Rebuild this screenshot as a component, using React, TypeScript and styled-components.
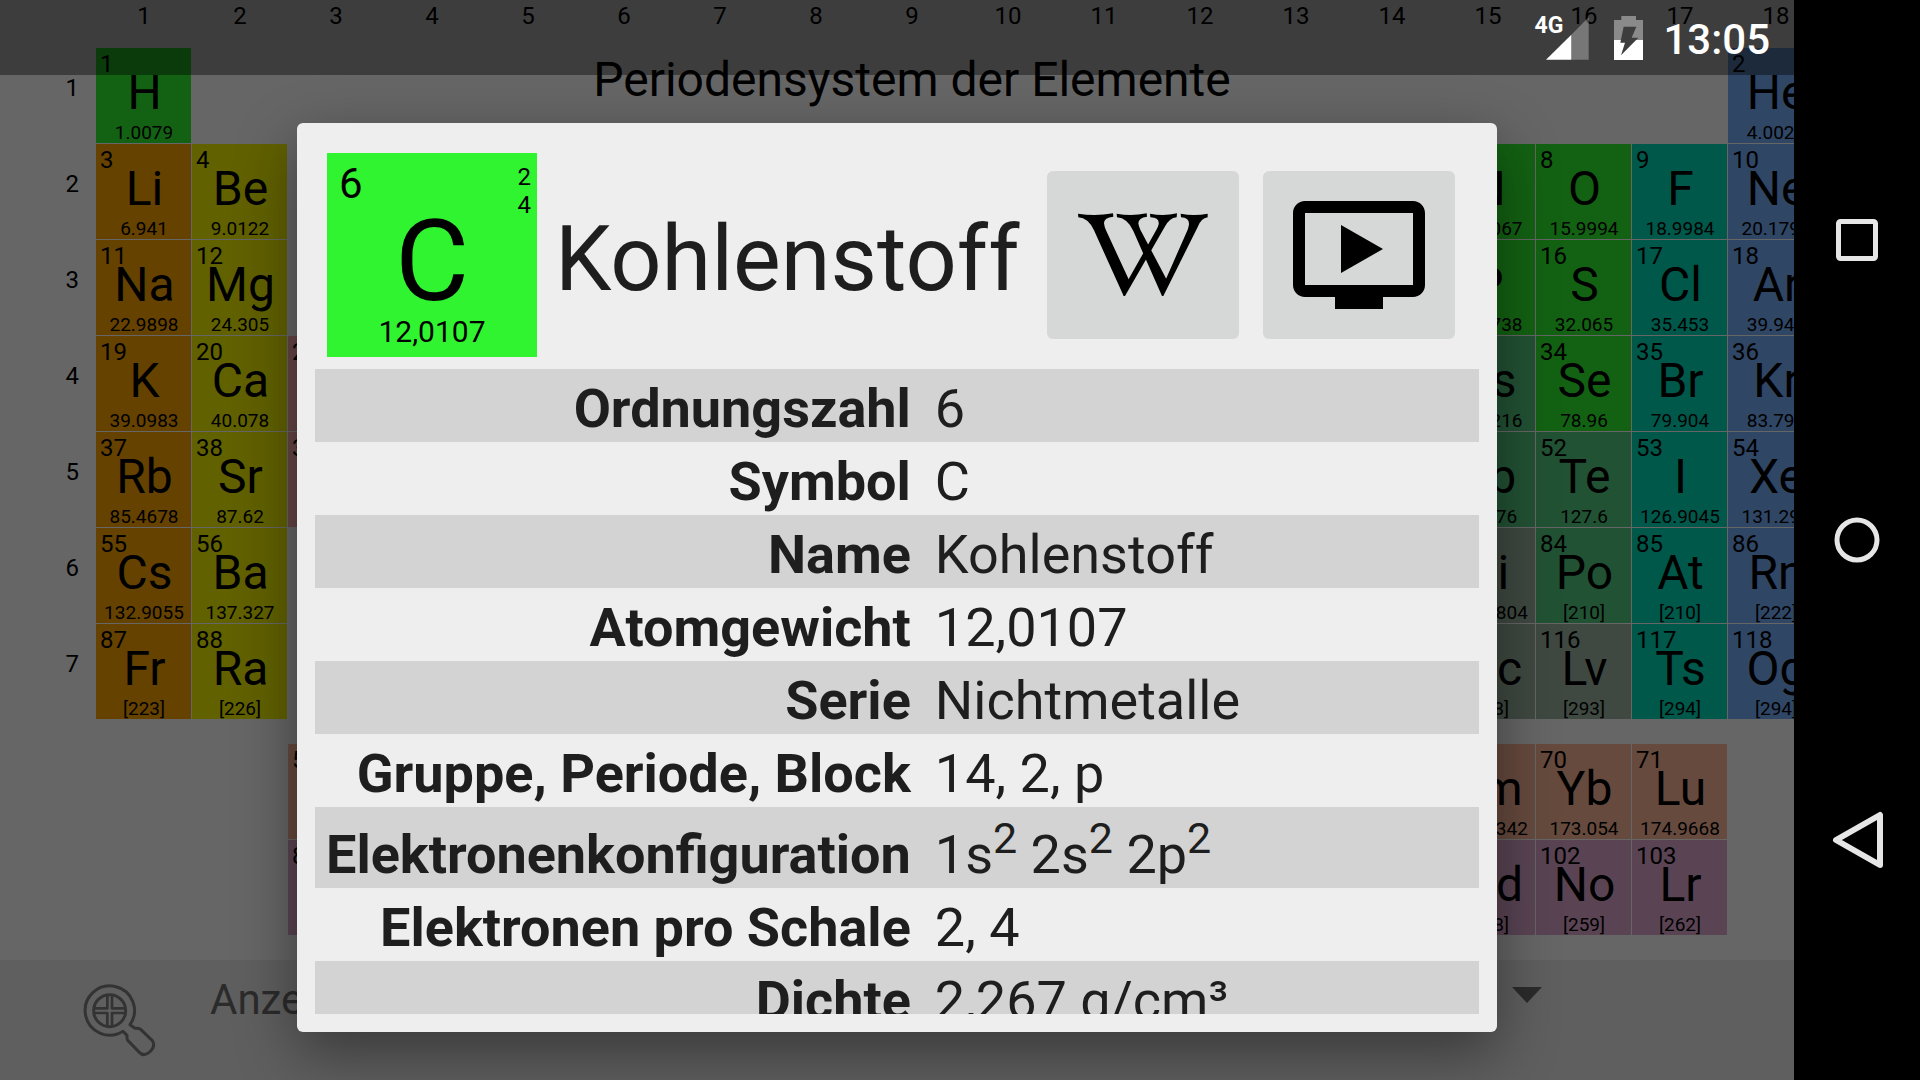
import React from 'react';
import styled, { createGlobalStyle } from 'styled-components';

const GlobalStyle = createGlobalStyle`
  *, *::before, *::after { box-sizing: border-box; }
  body {
    margin: 0;
    background: #000;
    font-family: Roboto, "Noto Sans", sans-serif;
  }
`;

const seriesColors = {
  nonmetal: '#30f430',
  alkali: '#ffa500',
  alkaline: '#f2f200',
  transition: '#ffb0b0',
  lanthanide: '#ffb89c',
  actinide: '#e0aad2',
  metalloid: '#55cc82',
  post: '#9db6a3',
  halogen: '#00dcba',
  noble: '#78aefc',
};

type Series = keyof typeof seriesColors;
type ElementData = [number, string, string, Series, number, number];

/* number, symbol, mass, series, group, row */
const elements: ElementData[] = [
  [1, 'H', '1.0079', 'nonmetal', 1, 1],
  [2, 'He', '4.0026', 'noble', 18, 1],
  [3, 'Li', '6.941', 'alkali', 1, 2],
  [4, 'Be', '9.0122', 'alkaline', 2, 2],
  [7, 'N', '14.0067', 'nonmetal', 15, 2],
  [8, 'O', '15.9994', 'nonmetal', 16, 2],
  [9, 'F', '18.9984', 'halogen', 17, 2],
  [10, 'Ne', '20.1797', 'noble', 18, 2],
  [11, 'Na', '22.9898', 'alkali', 1, 3],
  [12, 'Mg', '24.305', 'alkaline', 2, 3],
  [15, 'P', '30.9738', 'nonmetal', 15, 3],
  [16, 'S', '32.065', 'nonmetal', 16, 3],
  [17, 'Cl', '35.453', 'halogen', 17, 3],
  [18, 'Ar', '39.948', 'noble', 18, 3],
  [19, 'K', '39.0983', 'alkali', 1, 4],
  [20, 'Ca', '40.078', 'alkaline', 2, 4],
  [21, 'Sc', '44.9559', 'transition', 3, 4],
  [33, 'As', '74.9216', 'metalloid', 15, 4],
  [34, 'Se', '78.96', 'nonmetal', 16, 4],
  [35, 'Br', '79.904', 'halogen', 17, 4],
  [36, 'Kr', '83.798', 'noble', 18, 4],
  [37, 'Rb', '85.4678', 'alkali', 1, 5],
  [38, 'Sr', '87.62', 'alkaline', 2, 5],
  [39, 'Y', '88.9059', 'transition', 3, 5],
  [51, 'Sb', '121.76', 'metalloid', 15, 5],
  [52, 'Te', '127.6', 'metalloid', 16, 5],
  [53, 'I', '126.9045', 'halogen', 17, 5],
  [54, 'Xe', '131.293', 'noble', 18, 5],
  [55, 'Cs', '132.9055', 'alkali', 1, 6],
  [56, 'Ba', '137.327', 'alkaline', 2, 6],
  [83, 'Bi', '208.9804', 'post', 15, 6],
  [84, 'Po', '[210]', 'metalloid', 16, 6],
  [85, 'At', '[210]', 'halogen', 17, 6],
  [86, 'Rn', '[222]', 'noble', 18, 6],
  [87, 'Fr', '[223]', 'alkali', 1, 7],
  [88, 'Ra', '[226]', 'alkaline', 2, 7],
  [115, 'Mc', '[288]', 'post', 15, 7],
  [116, 'Lv', '[293]', 'post', 16, 7],
  [117, 'Ts', '[294]', 'halogen', 17, 7],
  [118, 'Og', '[294]', 'noble', 18, 7],
  [57, 'La', '138.9055', 'lanthanide', 3, 9],
  [69, 'Tm', '168.9342', 'lanthanide', 15, 9],
  [70, 'Yb', '173.054', 'lanthanide', 16, 9],
  [71, 'Lu', '174.9668', 'lanthanide', 17, 9],
  [89, 'Ac', '[227]', 'actinide', 3, 10],
  [101, 'Md', '[258]', 'actinide', 15, 10],
  [102, 'No', '[259]', 'actinide', 16, 10],
  [103, 'Lr', '[262]', 'actinide', 17, 10],
];

const groups = Array.from({ length: 18 }, (_, i) => i + 1);
const periods = [1, 2, 3, 4, 5, 6, 7];

const Superscript = styled.sup`
  font-size: 43px;
  line-height: 50px;
  vertical-align: 20px;
`;

const properties: [string, React.ReactNode][] = [
  ['Ordnungszahl', '6'],
  ['Symbol', 'C'],
  ['Name', 'Kohlenstoff'],
  ['Atomgewicht', '12,0107'],
  ['Serie', 'Nichtmetalle'],
  ['Gruppe, Periode, Block', '14, 2, p'],
  [
    'Elektronenkonfiguration',
    <>
      1s<Superscript>2</Superscript> 2s<Superscript>2</Superscript> 2p<Superscript>2</Superscript>
    </>,
  ],
  ['Elektronen pro Schale', '2, 4'],
  ['Dichte', '2,267 g/cm³'],
];

const Device = styled.div`
  display: flex;
  height: 100vh;
  overflow: hidden;
`;

const Screen = styled.main`
  position: relative;
  flex: 1;
  min-width: 0;
  display: flex;
  flex-direction: column;
  overflow: hidden;
  background: #fff;
`;

const TableArea = styled.section`
  flex: 1;
  min-height: 0;
  overflow: hidden;
`;

const PeriodicGrid = styled.div`
  display: grid;
  grid-template-columns: repeat(19, 96px);
  grid-template-rows: 48px repeat(7, 96px) 24px repeat(2, 96px);
  color: #000;
`;

const GroupLabel = styled.div<{ $group: number }>`
  grid-column: ${(p) => p.$group + 1};
  grid-row: 1;
  padding-top: 2px;
  font-size: 24px;
  line-height: 28px;
  text-align: center;
`;

const PeriodLabel = styled.div<{ $row: number }>`
  grid-column: 1;
  grid-row: ${(p) => p.$row + 1};
  padding: 26px 17px 0 0;
  font-size: 24px;
  line-height: 28px;
  text-align: right;
`;

const TableTitle = styled.h1`
  grid-column: 4 / 17;
  grid-row: 2;
  margin: 0;
  padding-top: 4px;
  font-size: 48px;
  font-weight: 400;
  line-height: 56px;
  text-align: center;
`;

const Cell = styled.button<{ $series: Series; $group: number; $row: number }>`
  grid-column: ${(p) => p.$group + 1};
  grid-row: ${(p) => p.$row + 1};
  display: grid;
  grid-template: 100% / 100%;
  margin: 0 1px 1px 0;
  padding: 0;
  border: 0;
  background: ${(p) => seriesColors[p.$series]};
  color: #000;
  font-family: inherit;

  & > * { grid-area: 1 / 1; }
`;

const CellNumber = styled.span`
  align-self: start;
  padding: 2px 0 0 4px;
  font-size: 24px;
  line-height: 28px;
  text-align: left;
`;

const CellSymbol = styled.span`
  align-self: center;
  padding: 0 0 6px 2px;
  font-size: 48px;
  line-height: 56px;
  text-align: center;
`;

const CellMass = styled.span`
  align-self: end;
  padding-left: 1px;
  font-size: 19px;
  line-height: 20px;
  text-align: center;
`;

const Footer = styled.footer`
  display: flex;
  align-items: flex-start;
  gap: 45px;
  height: 120px;
  padding: 16px 252px 0 75px;
  background: #ededed;
`;

const ZoomButton = styled.button`
  flex: none;
  padding: 0;
  border: 0;
  background: none;

  svg { display: block; }
`;

const Spinner = styled.label`
  flex: 1;
  display: flex;
  color: #6c6c6c;

  svg { flex: none; margin-top: 11px; }
`;

const SpinnerSelect = styled.select`
  flex: 1;
  appearance: none;
  height: 48px;
  padding: 0;
  border: 0;
  background: none;
  color: inherit;
  font-family: inherit;
  font-size: 42px;
  line-height: 48px;
`;

const Scrim = styled.div`
  position: absolute;
  inset: 0;
  display: flex;
  justify-content: center;
  padding: 123px 48px 48px;
  background: rgba(0, 0, 0, 0.6);
`;

const Dialog = styled.div`
  display: flex;
  flex-direction: column;
  width: 100%;
  max-width: 1200px;
  padding: 18px;
  border-radius: 6px;
  background: #eeeeee;
  box-shadow: 0 20px 60px rgba(0, 0, 0, 0.42);
  color: #1e1e1e;
`;

const DialogHeader = styled.header`
  flex: none;
  display: flex;
  align-items: center;
  gap: 24px;
  padding: 12px 24px 12px 12px;
`;

const Tile = styled.div`
  flex: none;
  display: grid;
  grid-template: 100% / 100%;
  width: 210px;
  height: 204px;
  background: #30f430;
  color: #000;

  & > * { grid-area: 1 / 1; }
`;

const TileNumber = styled.span`
  padding: 6px 0 0 12px;
  font-size: 42px;
  line-height: 49px;
`;

const TileShells = styled.div`
  display: flex;
  flex-direction: column;
  padding: 10px 6px 0 0;
  font-size: 24px;
  line-height: 28px;
  text-align: right;
`;

const TileSymbol = styled.span`
  align-self: center;
  padding-top: 12px;
  font-size: 114px;
  line-height: 134px;
  text-align: center;
`;

const TileMass = styled.span`
  align-self: end;
  padding-bottom: 8px;
  font-size: 30px;
  line-height: 35px;
  text-align: center;
`;

const DialogTitle = styled.h2`
  flex: 1;
  min-width: 0;
  margin: 0 0 0 -6px;
  padding-top: 8px;
  font-size: 90px;
  font-weight: 400;
  line-height: 105px;
  white-space: nowrap;
`;

const ActionButton = styled.button`
  flex: none;
  display: flex;
  align-items: center;
  justify-content: center;
  width: 192px;
  height: 168px;
  padding: 0;
  border: 0;
  border-radius: 6px;
  background: #d6d7d7;
`;

const Scroller = styled.div`
  flex: 1;
  min-height: 0;
  overflow: hidden;
`;

const PropertyTable = styled.table`
  width: 100%;
  border-collapse: collapse;
  font-size: 54px;
  line-height: 67px;
`;

const PropertyRow = styled.tr`
  &:nth-child(odd) { background: #d3d3d3; }
`;

const PropertyName = styled.th`
  width: 1px;
  padding: 6px 12px 0 11px;
  font-weight: 700;
  text-align: right;
  white-space: nowrap;
  vertical-align: baseline;
`;

const PropertyValue = styled.td`
  padding: 6px 12px 0;
  vertical-align: baseline;
`;

const StatusBar = styled.div`
  position: absolute;
  inset: 0 0 auto;
  display: flex;
  align-items: center;
  justify-content: flex-end;
  gap: 20px;
  height: 75px;
  padding-right: 24px;
  background: rgba(0, 0, 0, 0.4);
  color: #fff;

  svg { display: block; }
`;

const Signal = styled.div`
  position: relative;
  margin-right: 5px;
  padding: 2px 0 0 12px;
`;

const SignalLabel = styled.span`
  position: absolute;
  top: -2px;
  left: 0;
  font-size: 23px;
  font-weight: 700;
  line-height: 26px;
`;

const Clock = styled.time`
  padding-top: 4px;
  font-size: 42px;
  font-weight: 500;
  line-height: 49px;
`;

const NavigationBar = styled.nav`
  flex: none;
  display: flex;
  flex-direction: column;
  justify-content: center;
  width: 126px;
  background: #000;
`;

const NavButton = styled.button`
  display: flex;
  align-items: center;
  justify-content: center;
  height: 300px;
  padding: 0;
  border: 0;
  background: none;
`;

function ElementCell({ data }: { data: ElementData }) {
  const [number, symbol, mass, series, group, row] = data;
  return (
    <Cell type="button" $series={series} $group={group} $row={row}>
      <CellNumber>{number}</CellNumber>
      <CellSymbol>{symbol}</CellSymbol>
      <CellMass>{mass}</CellMass>
    </Cell>
  );
}

function MagnifierIcon() {
  return (
    <svg width="90" height="90" viewBox="0 0 270 270" fill="none" stroke="#808080" strokeWidth="9" strokeLinejoin="round">
      <path d="M165 146A74 74 0 1 0 144 166L156 178Q155 190 159 194L193 229Q207 243 224 228Q243 210 232 194L197 160Q192 156 180 157Z" />
      <circle cx="104" cy="104" r="48" />
      <path d="M97 57V97H57M111 57V97H151M97 151V111H57M111 151V111H151" strokeWidth="8" />
    </svg>
  );
}

function WikipediaIcon() {
  return (
    <svg width="146" height="100" viewBox="0 0 438 300" fill="#000">
      <path d="M24 26Q76 34 129 25L130 35Q101 38 102 55Q103 65 108 76L177 225L164 273H161L72 76Q55 39 25 37Z" />
      <path d="M140 26Q184 34 230 25L231 35Q205 38 205 55Q206 64 211 74L289 222L279 273H276L190 78Q172 39 141 37Z" />
      <path d="M161 273H165L284 66Q298 39 320 37L321 25Q281 34 240 26L241 37Q269 38 266 58Q264 66 260 73L174 226Z" />
      <path d="M276 273H280L382 68Q393 39 413 37V26Q372 34 332 26L333 37Q358 38 357 58Q356 66 353 74L287 224Z" />
    </svg>
  );
}

function VideoIcon() {
  return (
    <svg width="144" height="144" viewBox="0 0 24 24" fill="#000">
      <path d="M21 3H3c-1.1 0-2 .9-2 2v12c0 1.1.9 2 2 2h5v2h8v-2h5c1.1 0 2-.9 2-2V5c0-1.1-.9-2-2-2zm0 14H3V5h18v12zm-5-6l-7 4V7z" />
    </svg>
  );
}

function SignalIcon() {
  return (
    <svg width="43" height="43" viewBox="196 49 129 129">
      <path d="M272 102L324 50V177H272Z" fill="#fff" fillOpacity="0.3" />
      <path d="M196 177L272 102V177Z" fill="#fff" />
    </svg>
  );
}

function BatteryIcon() {
  return (
    <svg width="29" height="44" viewBox="399 45 87 132">
      <path d="M421 45H465V57H486V117H399V57H421Z" fill="#fff" fillOpacity="0.4" />
      <path d="M399 117H486V177H399Z" fill="#fff" />
      <path d="M428 77H466L452 110H472L420 163L432 125H418Z" fill="#3d3d3d" />
    </svg>
  );
}

export default function App() {
  return (
    <>
      <GlobalStyle />
      <Device>
        <Screen>
          <TableArea>
            <PeriodicGrid>
              {groups.map((g) => <GroupLabel key={g} $group={g}>{g}</GroupLabel>)}
              {periods.map((p) => <PeriodLabel key={p} $row={p}>{p}</PeriodLabel>)}
              <TableTitle>Periodensystem der Elemente</TableTitle>
              {elements.map((e) => <ElementCell key={e[0]} data={e} />)}
            </PeriodicGrid>
          </TableArea>
          <Footer>
            <ZoomButton type="button" aria-label="Vergrößern"><MagnifierIcon /></ZoomButton>
            <Spinner>
              <SpinnerSelect aria-label="Anzeige">
                <option>Anzeige</option>
              </SpinnerSelect>
              <svg width="30" height="16" viewBox="0 0 30 16"><path d="M0 0H30L15 16Z" fill="currentColor" /></svg>
            </Spinner>
          </Footer>
          <Scrim>
            <Dialog role="dialog" aria-labelledby="element-name">
              <DialogHeader>
                <Tile>
                  <TileNumber>6</TileNumber>
                  <TileShells><span>2</span><span>4</span></TileShells>
                  <TileSymbol>C</TileSymbol>
                  <TileMass>12,0107</TileMass>
                </Tile>
                <DialogTitle id="element-name">Kohlenstoff</DialogTitle>
                <ActionButton type="button" aria-label="Wikipedia"><WikipediaIcon /></ActionButton>
                <ActionButton type="button" aria-label="Video"><VideoIcon /></ActionButton>
              </DialogHeader>
              <Scroller>
                <PropertyTable>
                  <tbody>
                    {properties.map(([name, value]) => (
                      <PropertyRow key={name}>
                        <PropertyName scope="row">{name}</PropertyName>
                        <PropertyValue>{value}</PropertyValue>
                      </PropertyRow>
                    ))}
                  </tbody>
                </PropertyTable>
              </Scroller>
            </Dialog>
          </Scrim>
          <StatusBar>
            <Signal>
              <SignalLabel>4G</SignalLabel>
              <SignalIcon />
            </Signal>
            <BatteryIcon />
            <Clock>13:05</Clock>
          </StatusBar>
        </Screen>
        <NavigationBar>
          <NavButton type="button" aria-label="Übersicht">
            <svg width="44" height="44" viewBox="0 0 44 44" fill="none" stroke="#e6e6e6" strokeWidth="5">
              <rect x="3.5" y="3.5" width="37" height="37" rx="2" />
            </svg>
          </NavButton>
          <NavButton type="button" aria-label="Startseite">
            <svg width="48" height="48" viewBox="0 0 48 48" fill="none" stroke="#e6e6e6" strokeWidth="5">
              <circle cx="24" cy="24" r="20" />
            </svg>
          </NavButton>
          <NavButton type="button" aria-label="Zurück">
            <svg width="52" height="58" viewBox="0 0 52 58" fill="none" stroke="#e6e6e6" strokeWidth="6" strokeLinejoin="round">
              <path d="M49 4V54L5 29Z" />
            </svg>
          </NavButton>
        </NavigationBar>
      </Device>
    </>
  );
}
